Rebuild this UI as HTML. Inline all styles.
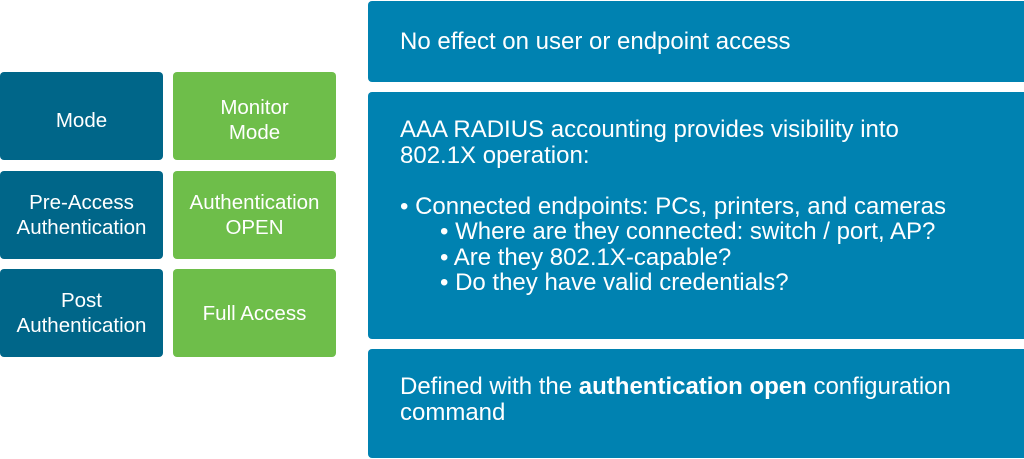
<!DOCTYPE html>
<html><head><style>
body{margin:0;width:1024px;height:459px;background:#fff;position:relative;overflow:hidden;font-family:"Liberation Sans",Arial,sans-serif;color:#fff}
.b{position:absolute;border-radius:4px;display:flex;align-items:center;justify-content:center;text-align:center;font-size:20.5px;line-height:25px;box-sizing:border-box;white-space:nowrap}
.d{background:#006689;left:0;width:163px}
.g{background:#6ebe4a;left:173px;width:163px}
.r{position:absolute;left:368px;width:656px;background:#0082b1;border-radius:4px 0 0 4px;font-size:24px;line-height:25.5px;padding-left:32px;box-sizing:border-box;white-space:nowrap}
</style></head><body>
<div class="b d" style="top:72px;height:88px;padding-top:8px">Mode</div>
<div class="b g" style="top:72px;height:88px;padding-top:8px">Monitor<br>Mode</div>
<div class="b d" style="top:171px;height:88px">Pre-Access<br>Authentication</div>
<div class="b g" style="top:171px;height:88px">Authentication<br>OPEN</div>
<div class="b d" style="top:269px;height:88px">Post<br>Authentication</div>
<div class="b g" style="top:269px;height:88px">Full Access</div>
<div class="r" style="top:1px;height:81px;padding-top:28px">No effect on user or endpoint access</div>
<div class="r" style="top:92px;height:247px;padding-top:25px">AAA RADIUS accounting provides visibility into<br>802.1X operation:<br><br>• Connected endpoints: PCs, printers, and cameras<br><span style="padding-left:40px">• Where are they connected: switch / port, AP?</span><br><span style="padding-left:40px">• Are they 802.1X-capable?</span><br><span style="padding-left:40px">• Do they have valid credentials?</span></div>
<div class="r" style="top:349px;height:109px;padding-top:25px">Defined with the <b>authentication open</b> configuration<br>command</div>
</body></html>
